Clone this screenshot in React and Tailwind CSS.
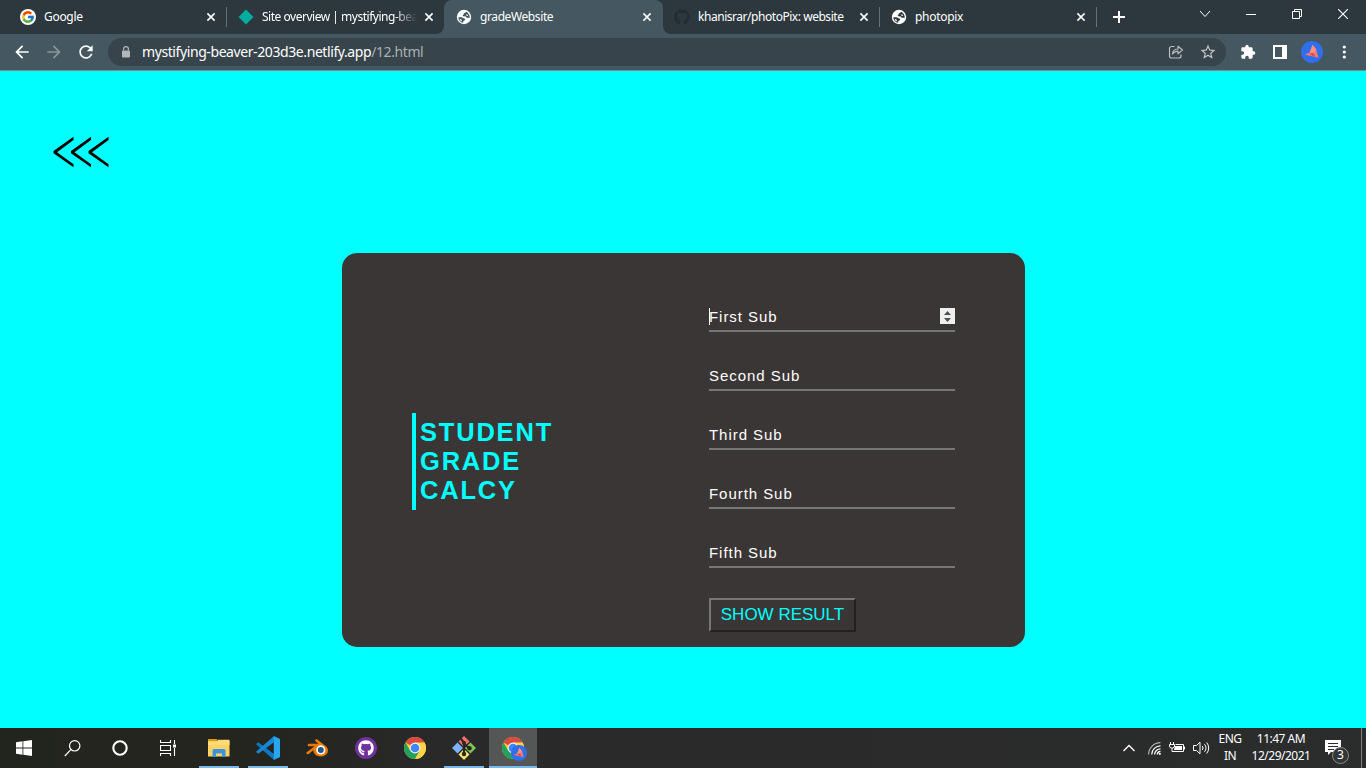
import React from "react";
import { FcGoogle } from "react-icons/fc";
import { FaGithub } from "react-icons/fa";
import { MdExtension, MdStarOutline, MdArrowBack, MdArrowForward, MdRefresh } from "react-icons/md";

const Cross = () => (
  <svg width="10" height="10" viewBox="0 0 10 10" className="shrink-0" stroke="#fff" strokeWidth="1.6">
    <path d="M1.4 1.4l7.2 7.2M8.6 1.4l-7.2 7.2" />
  </svg>
);

function Tab({ icon, title, spacing, width, sep, fade, titleWidth = "w-[157px]" }) {
  return (
    <div className={`flex h-[34px] items-center ${width}`}>
      <div className="flex w-4 shrink-0 justify-center">{icon}</div>
      <div className={`ml-2 shrink-0 overflow-hidden whitespace-nowrap text-[12px] leading-4 text-white ${titleWidth} ${spacing} ${fade ? "[mask-image:linear-gradient(to_right,#000_132px,transparent_155px)]" : ""}`}>
        {title}
      </div>
      <div className="ml-[5px] flex"><Cross /></div>
      {sep && <div className="ml-[10px] h-5 w-px bg-[#667177]" />}
    </div>
  );
}

const Globe = ({ land }) => (
  <svg width="16" height="16" viewBox="0 0 16 16">
    <circle cx="8" cy="8" r="7.200" fill="#fff" />
    <path
      d="M10.300 2.800C9.800 3.900 8 3.700 7.800 5c-.1.900-1 .8-1.100 1.500-.1.800 1 .8 2.100.8 1.100.1 1.400 1.400 2.400 1.500.9.100 1.700-.2 2.600-.1-.1-2.500-1.400-4.900-3.500-5.900z"
      className={land}
    />
    <path d="M10.500 5.200c.9 0 1.600.9 1.400 1.700-.8.300-1.700-.1-1.800-.8z" fill="#fff" />
    <path d="M2.300 8.200c1.600.3 3-.2 4.300.6 1.100.7 2.500.6 2.600 1.600.1.900-1.500.9-1.800 1.700-.2.600-.2 1.100-.2 1.700-2.700-.4-4.800-2.700-4.900-5.600z" className={land} />
    <path d="M3.600 9.700c.9.500 1.900.4 2.200 1.300.2.600-.2.900-.3 1.500-1-.6-1.700-1.600-1.900-2.800z" fill="#fff" />
  </svg>
);

const Bird = ({ size }) => (
  <svg width={size} height={size} viewBox="0 0 22 22">
    <circle cx="11" cy="11" r="11" fill="#2f6fee" />
    <path d="M11.500 3.800l3.800 4.700.9 4 1.300 4.300-5-1.300-8.700-1.800 5-2.400z" fill="#f8796f" />
    <path d="M11.500 3.800l3.800 4.700-2.800 3.800-3.700-1z" fill="#ff8f80" />
    <path d="M8.800 13l3.700-1.500 1.700 3.900-3-.6z" fill="#d94a52" />
  </svg>
);

const ChromeLogo = () => (
  <svg width="24" height="24" viewBox="0 0 24 24">
    <circle cx="12" cy="12" r="11" fill="#fbc934" />
    <path d="M12 12L2.470 6.500A11 11 0 0 1 21.530 6.500z" fill="#d94b3f" />
    <path d="M2.470 6.500A11 11 0 0 0 12 23L16.800 14.600 12 12 7.200 14.700z" fill="#23a05c" />
    <path d="M12 6.500h9.530A11 11 0 0 1 12 23l4.800-8.300z" fill="#fdd347" />
    <circle cx="12" cy="12" r="5.400" fill="#f3f5f8" />
    <circle cx="12" cy="12" r="4.300" fill="#4285f4" />
  </svg>
);

const GitLogo = () => (
  <svg width="26" height="26" viewBox="0 0 26 26">
    <path d="M13 1l5.500 5.500L13 12 7.500 6.500z" fill="#f3706f" />
    <path d="M6.500 7.500L12 13l-5.500 5.500L1 13z" fill="#7cb1fb" />
    <path d="M19.500 7.500L25 13l-5.500 5.500L14 13z" fill="#80c553" />
    <path d="M13 14l5.500 5.500L13 25l-5.500-5.500z" fill="#fbe067" />
    <path d="M9.500 3.500l3.500 4v11.500M13 8.500l5 4.500" stroke="#2c2623" strokeWidth="2" fill="none" />
    <circle cx="13" cy="8" r="2" fill="#2c2623" />
    <circle cx="13" cy="19" r="2.200" fill="#2c2623" />
    <circle cx="18.500" cy="13.300" r="2.200" fill="#2c2623" />
  </svg>
);

const VsCode = () => (
  <svg width="24" height="24" viewBox="0 0 24 24">
    <path d="M0 8.200l2.200-1.900L18 18v6z" fill="#0b78c4" />
    <path d="M0 15.800L18 0v6.200L2.200 17.700z" fill="#1488d3" />
    <path d="M17.800 0L24 3v18l-6.200 3z" fill="#2aa6ef" />
  </svg>
);

const Explorer = () => (
  <svg width="22" height="20" viewBox="0 0 22 20">
    <path d="M0 3h21.500v15.500H0z" fill="#fed364" />
    <path d="M0 3h9l1-1.200h11.500V7H0z" fill="#ffdb7a" />
    <path d="M0 1h9.500l-1 2.200H0z" fill="#df9b10" />
    <path d="M4.500 12.500a1.500 1.500 0 0 1 1.500-1.500h10a1.500 1.500 0 0 1 1.500 1.500V19h-3.500v-3.500H8V19H4.500z" fill="#3b93dc" />
  </svg>
);

function Task({ children, open, active }) {
  return (
    <div className={`flex h-10 w-12 flex-col items-center ${active ? "bg-[#555656]" : ""}`}>
      <div className="flex h-[38px] items-center pt-[2px]">{children}</div>
      {open && <div className={`h-[2px] bg-[#76b9ed] ${active ? "w-12" : "w-10"}`} />}
    </div>
  );
}

function Browser() {
  return (
    <header className="font-['Noto_Sans','Open_Sans',sans-serif]">
      <div className="flex h-[34px] bg-[#455760]">
        <div className="flex w-[444px] rounded-br-lg bg-[#2d383e] pl-5">
          <Tab width="w-[218px]" icon={<span className="flex h-4 w-4 items-center justify-center rounded-full bg-white"><FcGoogle size={14} /></span>} title="Google" spacing="tracking-[-0.3px]" sep />
          <Tab width="w-[206px]" icon={<svg width="16" height="16" viewBox="0 0 16 16"><path d="M8 .5L15.500 8 8 15.500.5 8z" fill="#02ad9f" /></svg>} title="Site overview | mystifying-bea" spacing="tracking-[-0.48px]" fade />
        </div>
        <div className="w-[219px] bg-[linear-gradient(#2d383e_50%,#455760_50%)]">
          <div className="rounded-t-lg bg-[#455760] pl-3">
            <Tab width="w-[207px]" icon={<Globe land="fill-[#43555e]" />} title="gradeWebsite" spacing="tracking-[-0.4px]" />
          </div>
        </div>
        <div className="flex flex-1 rounded-bl-lg bg-[#2d383e] pl-[11px]">
          <Tab width="w-[217px]" titleWidth="w-[156px]" icon={<FaGithub size={16} color="#242c32" />} title="khanisrar/photoPix: website" spacing="tracking-[-0.46px]" sep />
          <Tab width="w-[218px]" titleWidth="w-[156px]" icon={<Globe land="fill-[#2d383e]" />} title="photopix" spacing="tracking-[-0.3px]" sep />
          <div className="flex h-[34px] w-[20px] items-center justify-center">
            <svg width="12" height="12" viewBox="0 0 12 12" className="shrink-0" stroke="#fff" strokeWidth="2"><path d="M6 0v12M0 6h12" /></svg>
          </div>
          <div className="ml-auto flex h-7 items-center">
            <div className="flex w-[46px] justify-center"><svg width="12" height="8" viewBox="0 0 12 8" fill="none" stroke="#fff"><path d="M1 1l5 5.500L11 1" /></svg></div>
            <div className="flex w-[46px] justify-center pt-px"><div className="h-px w-[10px] bg-white" /></div>
            <div className="flex w-[46px] justify-center"><svg width="10" height="10" viewBox="0 0 10 10" fill="none" stroke="#fff"><path d="M.5 2.500h7v7h-7zM2.500 2.500v-2h7v7h-2" /></svg></div>
            <div className="flex w-[46px] justify-center"><svg width="10" height="10" viewBox="0 0 10 10" stroke="#fff" strokeWidth="1.100"><path d="M0 0l10 10M10 0L0 10" /></svg></div>
          </div>
        </div>
      </div>
      <div className="flex h-[37px] items-center border-b border-[#7e888d] bg-[#455760] px-[6px]">
        <div className="flex w-8 justify-center"><MdArrowBack size={20} color="#fff" /></div>
        <div className="flex w-8 justify-center"><MdArrowForward size={20} color="#8b969b" /></div>
        <div className="flex w-8 justify-center"><MdRefresh size={20} color="#fff" /></div>
        <div className="ml-[6px] flex h-7 w-[1118px] items-center rounded-full bg-[#37444b] pl-[13px] pr-[2px]">
          <svg width="10" height="12" viewBox="0 0 10 12" className="mb-px"><path d="M1.500 5h7v6h-7z" fill="#b0b6b9" stroke="#b0b6b9" strokeLinejoin="round" /><path d="M2.600 4.500V3a2.400 2.400 0 0 1 4.800 0v1.500" fill="none" stroke="#b0b6b9" strokeWidth="1.200" /></svg>
          <div className="ml-[11px] whitespace-nowrap text-[14px] leading-5 tracking-[-0.41px] text-white">
            mystifying-beaver-203d3e.netlify.app<span className="text-[#aab1b4]">/12.html</span>
          </div>
          <div className="ml-auto flex w-8 justify-center">
            <svg width="16" height="16" viewBox="0 0 16 16" fill="none" stroke="#b6bcbf" strokeWidth="1.200">
              <path d="M6.500 2.500H3.500a2 2 0 0 0-2 2v7.500a2 2 0 0 0 2 2h7.500a2 2 0 0 0 2-2v-1.500" />
              <path d="M4.500 10c.3-3.200 2.300-5 5.500-5V2.200L14.500 6 10 9.800V7.200C7.500 7.200 6 8 4.500 10z" strokeLinejoin="round" />
            </svg>
          </div>
          <div className="flex w-8 justify-center"><MdStarOutline size={18} color="#c0c5c7" /></div>
        </div>
        <div className="ml-[6px] flex w-8 justify-center"><MdExtension size={16} color="#fff" /></div>
        <div className="flex w-8 justify-center"><svg width="14" height="14" viewBox="0 0 14 14"><path d="M0 0h14v14H0zM2 2v10h7V2z" fill="#fff" fillRule="evenodd" /></svg></div>
        <div className="flex w-8 justify-center"><Bird size={22} /></div>
        <div className="flex w-8 justify-center"><svg width="4" height="14" viewBox="0 0 4 14" fill="#fff"><circle cx="2.300" cy="2" r="1.600" /><circle cx="2.300" cy="7" r="1.600" /><circle cx="2.300" cy="12" r="1.600" /></svg></div>
      </div>
    </header>
  );
}

function Page() {
  const rest = ["Second Sub", "Third Sub", "Fourth Sub", "Fifth Sub"];
  return (
    <main className="flex h-[657px] flex-col bg-[#00ffff] font-['Liberation_Sans',Arial,sans-serif]">
      <svg width="58" height="33" viewBox="0 0 58 33" className="ml-[52px] mt-[65px]" fill="#000">
        <path d="M21.500 .8v3.200L5 16.200l16.500 12v3.100L1.500 17.300v-2.200zM39 .8v3.200L22.500 16.200 39 28.200v3.100L19 17.300v-2.200zM56.500 .8v3.200L40 16.200l16.500 12v3.100L36.500 17.300v-2.200z" />
      </svg>
      <section className="ml-[342px] mt-[84px] flex h-[394px] w-[683px] rounded-[15px] bg-[#3a3635] pl-[70px]">
        <div className="w-[297px] pt-[160px]">
          <h1 className="w-[180px] border-l-4 border-[#00ffff] py-[5px] pl-[4px] text-[25.5px] font-bold leading-[29px] tracking-[1.8px] text-[#00ffff]">
            STUDENT<br />GRADE<br />CALCY
          </h1>
        </div>
        <div className="w-[246px] pt-[49px]">
          <div className="flex h-[30px] items-center border-b-2 border-[#767676] pt-[2px] text-[15px] tracking-[0.95px] text-white">
            <div className="-mr-px mb-[2px] h-[17px] w-px bg-white" />
            <span>First Sub</span>
            <svg width="15" height="16" viewBox="0 0 15 16" className="mb-[2px] ml-auto">
              <path d="M0 0h15v16H0z" fill="#efefef" /><path d="M4 7l3.500-4L11 7zM4 10h7l-3.500 4z" fill="#505050" />
            </svg>
          </div>
          {rest.map((s) => (
            <div key={s} className="mt-[29px] flex h-[30px] items-center border-b-2 border-[#767676] pt-[2px] text-[15px] tracking-[0.95px] text-white">{s}</div>
          ))}
          <button className="mt-[30px] flex h-[34px] w-[147px] items-center justify-center whitespace-nowrap border-2 border-b-[#222020] border-l-[#767676] border-r-[#222020] border-t-[#767676] pb-px text-[17px] text-[#00ffff]">SHOW RESULT</button>
        </div>
      </section>
    </main>
  );
}

function Taskbar() {
  return (
    <footer className="flex h-10 bg-[linear-gradient(to_right,#22251d,#24251f_20%,#29292a_32%,#2b2c2c)] font-['Noto_Sans',sans-serif] text-white">
      <div className="mr-[3px] flex">
        <Task><svg width="16" height="16" viewBox="0 0 16 16" fill="#fff"><path d="M0 2.200l6.500-.9v6.200H0zM7.300 1.200L16 0v7.500H7.300zM0 8.400h6.500v6.300L0 13.800zM7.300 8.400H16V16l-8.700-1.200z" /></svg></Task>
        <Task><svg width="17" height="17" viewBox="0 0 17 17" fill="none" stroke="#fff" strokeWidth="1.200"><circle cx="10.700" cy="5.800" r="5.200" /><path d="M6.900 9.600L.8 16" /></svg></Task>
        <Task><svg width="16" height="16" viewBox="0 0 16 16" fill="none" stroke="#fff" strokeWidth="2.100"><circle cx="8" cy="8" r="6.700" /></svg></Task>
        <Task><svg width="16" height="16" viewBox="0 0 16 16" fill="none" stroke="#fff" strokeWidth="1.100"><path d="M.5 0v2.500h10V0M.5 5.500h10v5H.5zM.5 16v-2.500h10V16M14.500 0v4M14.500 8v8" /><path d="M13 4.500h3v3h-3z" fill="#fff" stroke="none" /></svg></Task>
      </div>
      <div className="flex gap-px">
        <Task open><Explorer /></Task>
        <Task open><VsCode /></Task>
        <Task>
          <svg width="24" height="20" viewBox="0 0 24 20"><path d="M1.400 14.500L9.500 8.200H3.200c-1-.6-.6-2.400.6-2.500h9.500L10.200 3c-.3-1.200.6-2.200 1.800-1.700l8.600 6.600c4.500 3.700 2.300 10.300-4.800 10.600-4.200 0-7.400-2.600-7.500-6.200L3.800 16c-1.600.7-3-.4-2.400-1.500z" fill="#ea7a0a" /><circle cx="15.800" cy="11.900" r="4.600" fill="#fff" /><circle cx="15.800" cy="11.900" r="3" fill="#225586" /></svg>
        </Task>
        <Task><span className="flex h-[22px] w-[22px] items-center justify-center rounded-full bg-[#71309b]"><FaGithub size={16} color="#fff" /></span></Task>
        <Task><ChromeLogo /></Task>
        <Task open><GitLogo /></Task>
        <Task open active>
          <div className="relative h-6 w-6"><ChromeLogo /><div className="absolute left-[10px] top-[9px]"><Bird size={16} /></div></div>
        </Task>
      </div>
      <div className="ml-auto flex h-10 items-center">
        <div className="flex w-6 justify-center"><svg width="12" height="8" viewBox="0 0 12 8" fill="none" stroke="#fff" strokeWidth="1.300"><path d="M.5 7L6 1.500 11.500 7" /></svg></div>
        <div className="flex w-6 justify-center pl-[2px] pt-px"><svg width="13" height="13" viewBox="0 0 13 13" fill="none" stroke="#fff" strokeWidth="1.200"><path d="M.6 12.500A12 12 0 0 1 12.500.7" stroke="#b0b1b1" /><path d="M3.700 12.500A8.800 8.800 0 0 1 12.500 3.900M6.500 12.500a6 6 0 0 1 6-5.600" /><path d="M9.200 12.500a3.300 3.300 0 0 1 3.300-3.100" /><circle cx="11.800" cy="11.800" r="1.100" fill="#fff" stroke="none" /></svg></div>
        <div className="flex w-6 justify-center"><svg width="16" height="12" viewBox="0 0 16 12" fill="none" stroke="#fff"><path d="M6.500 2.500h8v7h-9M3 6v3.500h3M1.500 0v2.500M4.500 0v2.500M.5 2.500h5v1.500a2 2 0 0 1-2 2h-1a2 2 0 0 1-2-2zM15.500 4.500v3" /><path d="M6 4h7v4H5z" fill="#fff" stroke="none" /></svg></div>
        <div className="flex w-6 justify-center"><svg width="17" height="14" viewBox="0 0 17 14" fill="none" stroke="#fff"><path d="M.5 4.500h3L7 1.200v11.600L3.500 9.500h-3zM9.200 5a3 3 0 0 1 0 4M11.500 3.200a6 6 0 0 1 0 7.600M13.700 1.500a8.600 8.600 0 0 1 0 11" /></svg></div>
        <div className="w-[34px] pb-[2px] text-center text-[12px] leading-[17px] tracking-[-0.5px]">ENG<br />IN</div>
        <div className="w-[68px] whitespace-nowrap pb-[2px] text-center text-[12px] leading-[17px] tracking-[-0.5px]">11:47 AM<br />12/29/2021</div>
        <div className="flex w-[46px] pl-[10px] pt-[7px]">
          <div className="relative h-6 w-6">
            <svg width="16" height="16" viewBox="0 0 16 16"><path d="M0 0h16v12H6l-3 3v-3H0z" fill="#fff" /><path d="M3 3.500h10M3 6.500h10M3 9.500h6" stroke="#2b2c2c" /></svg>
            <div className="absolute left-[7px] top-[7px] flex h-[17px] w-[17px] items-center justify-center rounded-full border border-[#8c8c8c] bg-[#343535] text-[12px] leading-none">3</div>
          </div>
        </div>
        <div className="mr-1 h-10 w-px bg-[#7b7c7c]" />
      </div>
    </footer>
  );
}

export default function App() {
  return (
    <div className="h-[768px] w-[1366px] overflow-hidden">
      <Browser />
      <Page />
      <Taskbar />
    </div>
  );
}
